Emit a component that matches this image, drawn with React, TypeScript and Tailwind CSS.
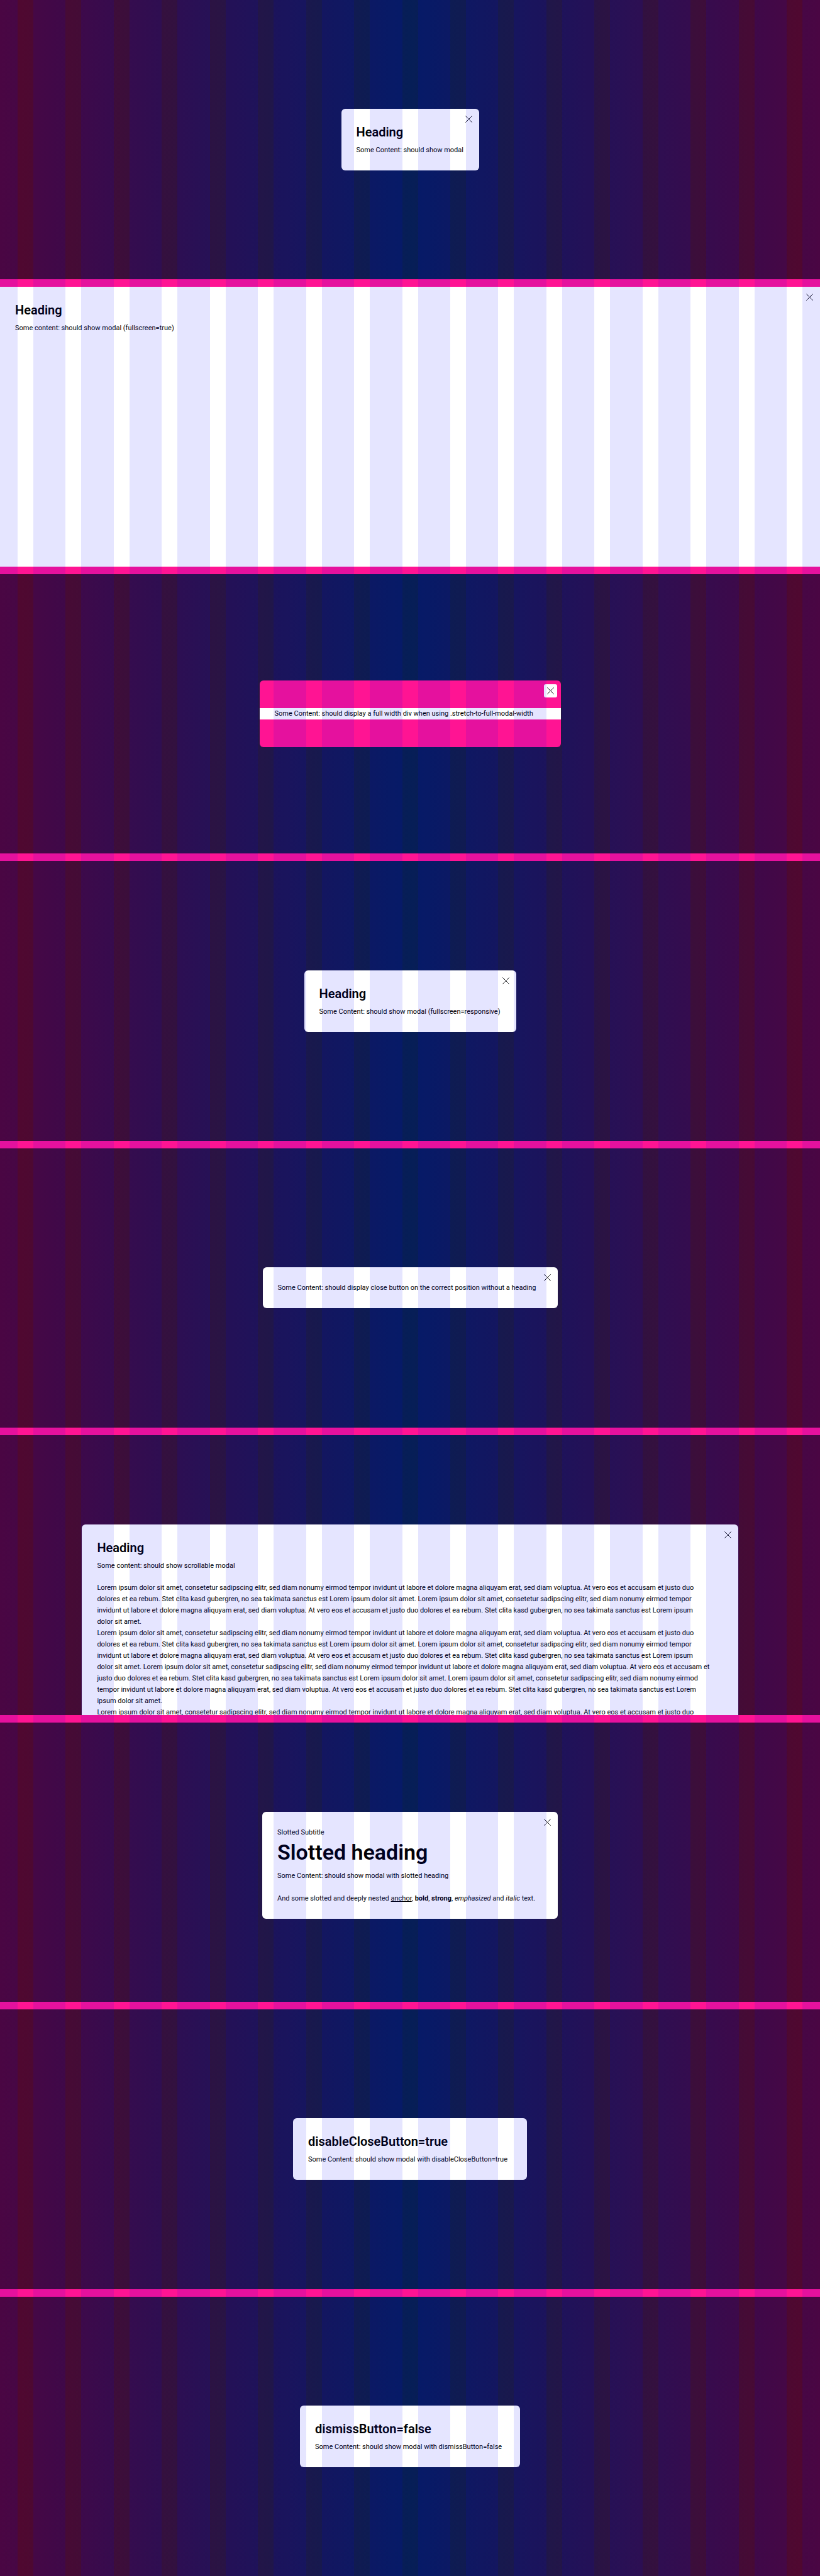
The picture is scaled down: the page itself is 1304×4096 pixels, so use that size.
import type { ReactNode } from "react";

function CloseButton() {
  return (
    <button
      type="button"
      aria-label="Dismiss modal"
      className="absolute right-[6px] top-[6px] flex size-[21px] items-center justify-center rounded-[3px] bg-white"
    >
      <svg viewBox="0 0 14 14" className="size-[11px]" fill="none" stroke="#010205" strokeWidth="1.2" aria-hidden="true">
        <path d="M0.4 0.4 13.6 13.6M13.6 0.4 0.4 13.6" />
      </svg>
    </button>
  );
}

function Stage({ children }: { children: ReactNode }) {
  return (
    <section className="flex min-h-0 flex-1 basis-0 items-center justify-center overflow-hidden bg-[linear-gradient(to_right,#53072e,#061e57_50%,#53072e)]">
      {children}
    </section>
  );
}

function TopAligned({ children }: { children: ReactNode }) {
  return <div className="flex h-full w-full items-start justify-center pt-[142px]">{children}</div>;
}

function Separator() {
  return <div className="h-[12px] shrink-0 bg-[#ff1493]" />;
}

function Heading({ children }: { children: ReactNode }) {
  return <h2 className="mb-[7px] text-[20px] font-semibold leading-[26px]">{children}</h2>;
}

function Modal({
  width,
  heading,
  closable = true,
  children,
}: {
  width: string;
  heading?: string;
  closable?: boolean;
  children: ReactNode;
}) {
  return (
    <div role="dialog" className={"relative max-w-full rounded-[6px] bg-white px-[24px] pb-[23px] pt-[24px] " + width}>
      {closable && <CloseButton />}
      {heading && <Heading>{heading}</Heading>}
      {children}
    </div>
  );
}

function GridOverlay() {
  return (
    <div
      aria-hidden="true"
      className="pointer-events-none absolute inset-0 grid grid-cols-[28px_repeat(16,minmax(0,1fr))_28px] gap-x-[25px]"
    >
      {Array.from({ length: 18 }, (_, i) => (
        <div key={i} className="bg-[#0000ff]/10" />
      ))}
    </div>
  );
}

const shortParagraph = [
  "Lorem ipsum dolor sit amet, consetetur sadipscing elitr, sed diam nonumy eirmod tempor invidunt ut labore et dolore magna aliquyam erat, sed diam voluptua. At vero eos et accusam et justo duo",
  "dolores et ea rebum. Stet clita kasd gubergren, no sea takimata sanctus est Lorem ipsum dolor sit amet. Lorem ipsum dolor sit amet, consetetur sadipscing elitr, sed diam nonumy eirmod tempor",
  "invidunt ut labore et dolore magna aliquyam erat, sed diam voluptua. At vero eos et accusam et justo duo dolores et ea rebum. Stet clita kasd gubergren, no sea takimata sanctus est Lorem ipsum",
];

const lines = [
  ...shortParagraph,
  "dolor sit amet.",
  ...shortParagraph,
  "dolor sit amet. Lorem ipsum dolor sit amet, consetetur sadipscing elitr, sed diam nonumy eirmod tempor invidunt ut labore et dolore magna aliquyam erat, sed diam voluptua. At vero eos et accusam et",
  "justo duo dolores et ea rebum. Stet clita kasd gubergren, no sea takimata sanctus est Lorem ipsum dolor sit amet. Lorem ipsum dolor sit amet, consetetur sadipscing elitr, sed diam nonumy eirmod",
  "tempor invidunt ut labore et dolore magna aliquyam erat, sed diam voluptua. At vero eos et accusam et justo duo dolores et ea rebum. Stet clita kasd gubergren, no sea takimata sanctus est Lorem",
  "ipsum dolor sit amet.",
  shortParagraph[0],
];

export default function App() {
  return (
    <main className="relative flex h-screen min-h-[2400px] flex-col font-['Roboto',sans-serif] text-[11px] leading-[18px] text-[#010205]">
      <Stage>
        <Modal width="w-[219px]" heading="Heading">
          <p>Some Content: should show modal</p>
        </Modal>
      </Stage>
      <Separator />

      <section className="min-h-0 flex-1 basis-0 overflow-hidden bg-white">
        <div role="dialog" className="relative p-[24px]">
          <CloseButton />
          <Heading>Heading</Heading>
          <p>Some content: should show modal (fullscreen=true)</p>
        </div>
      </section>
      <Separator />

      <Stage>
        <div role="dialog" className="relative w-[479px] max-w-full rounded-[6px] bg-[#ff1493] py-[44px]">
          <CloseButton />
          <p className="bg-white px-[24px]">
            Some Content: should display a full width div when using .stretch-to-full-modal-width
          </p>
        </div>
      </Stage>
      <Separator />

      <Stage>
        <Modal width="w-[337px]" heading="Heading">
          <p>Some Content: should show modal (fullscreen=responsive)</p>
        </Modal>
      </Stage>
      <Separator />

      <Stage>
        <Modal width="w-[469px]">
          <p>Some Content: should display close button on the correct position without a heading</p>
        </Modal>
      </Stage>
      <Separator />

      <Stage>
        <TopAligned>
          <Modal width="w-[80%]" heading="Heading">
            <p>Some content: should show scrollable modal</p>
            <p className="mt-[17px] whitespace-nowrap">
              {lines.map((line, i) => (
                <span key={i} className="block">
                  {line}
                </span>
              ))}
            </p>
          </Modal>
        </TopAligned>
      </Stage>
      <Separator />

      <Stage>
        <TopAligned>
          <Modal width="w-[470px]">
            <p>Slotted Subtitle</p>
            <h2 className="mb-[7px] text-[34px] font-semibold leading-[44px]">Slotted heading</h2>
            <p>Some Content: should show modal with slotted heading</p>
            <p className="mt-[18px]">
              And some slotted and deeply nested{" "}
              <a href="#" className="underline">
                anchor
              </a>
              , <b className="font-bold">bold</b>, <strong className="font-bold">strong</strong>,{" "}
              <em className="italic">emphasized</em> and <i className="italic">italic</i> text.
            </p>
          </Modal>
        </TopAligned>
      </Stage>
      <Separator />

      <Stage>
        <Modal width="w-[372px]" heading="disableCloseButton=true" closable={false}>
          <p>Some Content: should show modal with disableCloseButton=true</p>
        </Modal>
      </Stage>
      <Separator />

      <Stage>
        <Modal width="w-[350px]" heading="dismissButton=false" closable={false}>
          <p>Some Content: should show modal with dismissButton=false</p>
        </Modal>
      </Stage>

      <GridOverlay />
    </main>
  );
}
